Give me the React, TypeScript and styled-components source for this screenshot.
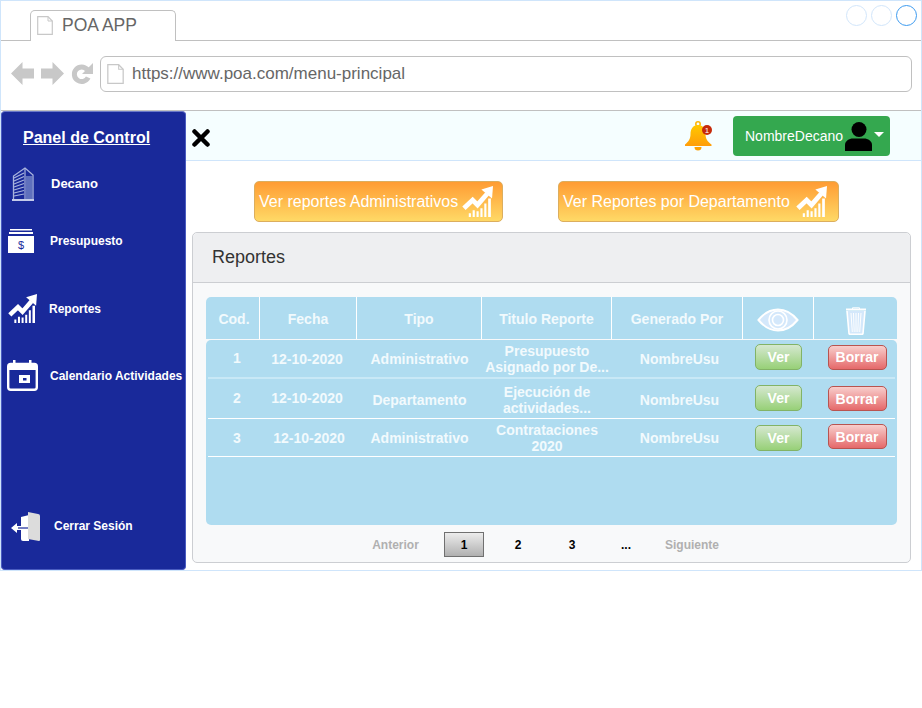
import * as React from "react";
import styled, { createGlobalStyle } from "styled-components";

const GlobalStyle = createGlobalStyle`
  html, body {
    margin: 0;
    padding: 0;
    background: #fff;
    font-family: "Liberation Sans", Arial, sans-serif;
  }
  * {
    box-sizing: border-box;
  }
`;

const DocIcon = ({ w, h }: { w: number; h: number }) => (
  <svg width={w} height={h} viewBox="0 0 16 19">
    <path d="M.7.7H11L15.3 5V18.3H.7Z" fill="#fff" stroke="#c8c8c8" strokeWidth="1.2" />
    <path d="M11 .7V5h4.3" fill="none" stroke="#c8c8c8" strokeWidth="1" />
  </svg>
);

const NavArrow = ({ flip }: { flip?: boolean }) => (
  <svg width="23" height="23" viewBox="0 0 23 23" style={flip ? { transform: "scaleX(-1)" } : undefined}>
    <path d="M0 11.5 11.5 0V6.5H23V16.5H11.5V23Z" fill="#c8c8c8" />
  </svg>
);

const ReloadIcon = () => (
  <svg width="22" height="23" viewBox="0 0 22 23">
    <path d="M17.2 15.5a7.3 7.3 0 1 1-1-8" fill="none" stroke="#c8c8c8" strokeWidth="5" />
    <path d="M22 1V12H11Z" fill="#c8c8c8" />
  </svg>
);

const BuildingIcon = () => (
  <svg width="22" height="34" viewBox="0 0 22 34">
    <path d="M1.500 32V9L13 1 21 8V32" fill="none" stroke="#a9b4de" strokeWidth="1.300" />
    <path d="M13 1V32" stroke="#a9b4de" strokeWidth="1.200" />
    <path
      d="M2 11 12 6M2 14 12 9.500M2 17 12 13M2 20 12 16.500M2 23 12 20M2 26 12 23.500M2 29 12 27"
      stroke="#a9b4de"
      strokeWidth="1.200"
    />
    <path d="M14 9h6v23h-6Z" fill="#5f70bd" />
    <path d="M0 33H22" stroke="#c4cbe9" strokeWidth="2" />
  </svg>
);

const MoneyIcon = () => (
  <svg width="26" height="24" viewBox="0 0 26 24">
    <rect x="2" y="0" width="22" height="1.500" fill="#fff" />
    <rect x="1" y="3" width="24" height="2" fill="#fff" />
    <rect x="0" y="7" width="26" height="17" fill="#fff" />
    <text x="13" y="20" fontSize="11" fontWeight="normal" textAnchor="middle" fill="#19299a" fontFamily="Liberation Sans, sans-serif">
      $
    </text>
  </svg>
);

const ChartIcon = ({ size }: { size: number }) => (
  <svg width={size} height={(size * 33) / 32} viewBox="0 0 32 33">
    <path d="M2 23 11 14.500l5 5L26 8" fill="none" stroke="#fff" strokeWidth="5" />
    <path d="M20 3.500 32 0 31 13Z" fill="#fff" />
    <path
      d="M7 28h2.200v5H7ZM11 25h2.200v8H11ZM15 26h2.200v7H15ZM19 23h2.200v10H19ZM23 18h2.200v15H23ZM27 13h2.800v20H27Z"
      fill="#fff"
    />
  </svg>
);

const CalendarIcon = () => (
  <svg width="31" height="31" viewBox="0 0 31 31">
    <rect x="1.200" y="4" width="28.600" height="25.800" rx="2.500" fill="none" stroke="#fff" strokeWidth="2.400" />
    <rect x="1" y="4" width="29" height="6" fill="#fff" />
    <rect x="6" y="0" width="2.500" height="6" fill="#fff" />
    <rect x="22" y="0" width="2.500" height="6" fill="#fff" />
    <rect x="12" y="15" width="11" height="8" fill="#fff" />
    <rect x="16" y="18" width="3.500" height="2.500" fill="#19299a" />
  </svg>
);

const LogoutIcon = () => (
  <svg width="31" height="31" viewBox="0 0 31 31">
    <path d="M11 6 19 4V30H13a2 2 0 0 1-2-2Z" fill="#fff" />
    <path d="M18 1 28 3a2 2 0 0 1 2 2V29a1 1 0 0 1-1 1L18 28Z" fill="#dcdcdc" />
    <path d="M1 17 7 12v3H18v4H7v3Z" fill="#fff" />
    <path d="M8 17H18" stroke="#19299a" strokeWidth="1.200" />
  </svg>
);

const CloseIcon = () => (
  <svg width="18" height="18" viewBox="0 0 18 18">
    <path d="M2.500 2.500 15.500 15.500M15.500 2.500 2.500 15.500" stroke="#000" strokeWidth="4.500" strokeLinecap="round" />
  </svg>
);

const BellIcon = () => (
  <svg width="28" height="30" viewBox="0 0 28 30">
    <defs>
      <linearGradient id="bell" x1="0" y1="0" x2="0" y2="1">
        <stop offset="0" stopColor="#ffc800" />
        <stop offset="1" stopColor="#ff9d0a" />
      </linearGradient>
    </defs>
    <circle cx="13" cy="3" r="2.200" fill="none" stroke="#ffb300" strokeWidth="1.500" />
    <path d="M13 4c5 0 7.500 4 7.500 9 0 5 2 7.500 6 10.500v1.500H0v-1.500c3.500-3 5.500-5.500 5.500-10.500 0-5 2.500-9 7.500-9Z" fill="url(#bell)" />
    <path d="M9.500 26h7a3.500 3.500 0 0 1-7 0Z" fill="#ffa000" />
    <circle cx="22" cy="9" r="5" fill="#c62a0a" />
    <text x="22" y="12" fontSize="8" textAnchor="middle" fill="#fff" fontFamily="Liberation Sans, sans-serif">
      1
    </text>
  </svg>
);

const UserIcon = () => (
  <svg width="27" height="29" viewBox="0 0 27 29">
    <circle cx="14" cy="7.500" r="7.500" fill="#000" />
    <path d="M0 29V23c0-4 4-6.500 8-6.500h11c4 0 8 2.500 8 6.500v6Z" fill="#000" />
  </svg>
);

const EyeIcon = () => (
  <svg width="42" height="24" viewBox="0 0 42 24">
    <path d="M1.500 12C8 4 14 1.500 21 1.500S34 4 40.500 12C34 20 28 22.500 21 22.500S8 20 1.500 12Z" fill="#d4e8fb" stroke="#fff" strokeWidth="2" />
    <circle cx="21" cy="12" r="9" fill="none" stroke="#fff" strokeWidth="1.600" />
    <circle cx="21" cy="12" r="5.500" fill="none" stroke="#fff" strokeWidth="1.600" />
  </svg>
);

const TrashIcon = () => (
  <svg width="22" height="28" viewBox="0 0 22 28">
    <path d="M1 2.500H21" stroke="#fff" strokeWidth="2" />
    <path d="M7.500 2V.8h7V2" fill="none" stroke="#fff" strokeWidth="1" />
    <path d="M2 4 4 26.500a1 1 0 0 0 1 .8H17a1 1 0 0 0 1-.8L20 4" fill="#d4e8fb" stroke="#fff" strokeWidth="1.600" />
    <path d="M6 6 7.300 25M11 6V25M16 6 14.700 25M8.500 6 9.200 25M13.500 6 12.800 25" stroke="#fff" strokeWidth="1" />
  </svg>
);

const Frame = styled.div`
  width: 922px;
  height: 571px;
  border: 1px solid #cfe5fb;
  display: flex;
  flex-direction: column;
`;

const TabStrip = styled.div`
  height: 40px;
  flex: none;
  border-bottom: 1px solid #c0c0c0;
  display: flex;
  justify-content: space-between;
  padding: 9px 4px 0 29px;
`;

const Tab = styled.div`
  width: 146px;
  height: 31px;
  border: 1px solid #c0c0c0;
  border-bottom: 0;
  border-radius: 5px 5px 0 0;
  background: #fff;
  display: flex;
  align-items: center;
  gap: 9px;
  padding: 0 0 1px 6px;
  font-size: 17.500px;
  color: #666;
`;

const WindowDots = styled.div`
  display: flex;
  gap: 4px;
  margin-top: -5px;
`;

const WindowDot = styled.span<{ $active?: boolean }>`
  width: 21px;
  height: 21px;
  border-radius: 50%;
  border: 1px solid ${(p) => (p.$active ? "#3d9bf0" : "#d2e6fb")};
`;

const AddressRow = styled.div`
  height: 70px;
  flex: none;
  border-bottom: 1px solid #c0c0c0;
  display: flex;
  align-items: center;
  padding: 0 9px 4px 10px;
`;

const NavIcons = styled.div`
  display: flex;
  align-items: center;
  gap: 7px;
  width: 89px;
  flex: none;
`;

const AddressBar = styled.div`
  flex: 1;
  height: 36px;
  border: 1px solid #c0c0c0;
  border-radius: 6px;
  display: flex;
  align-items: center;
  gap: 8px;
  padding: 0 0 0 6px;
  font-size: 17px;
  color: #666;
`;

const Body = styled.div`
  flex: 1;
  display: flex;
  min-height: 0;
`;

const Sidebar = styled.nav`
  width: 185px;
  flex: none;
  background: #19299a;
  border-radius: 4px;
  border: 1px solid #4a5cc0;
  border-top-color: #6a78c8;
  color: #fff;
  display: flex;
  flex-direction: column;
  padding-bottom: 18px;
`;

const PanelTitle = styled.div`
  height: 48px;
  flex: none;
  padding: 17px 0 0 21px;
  font-size: 16px;
  line-height: 18px;
  font-weight: bold;
  text-decoration: underline;
`;

const NavItem = styled.div<{ $height: number; $gap: number; $iconPad: number; $size?: number }>`
  height: ${(p) => p.$height}px;
  flex: none;
  display: flex;
  align-items: center;
  font-size: ${(p) => p.$size ?? 12}px;
  font-weight: bold;
  white-space: nowrap;

  & > svg {
    flex: none;
    margin-left: ${(p) => p.$iconPad}px;
  }
  & > span {
    margin-left: ${(p) => p.$gap}px;
  }
`;

const NavSpacer = styled.div`
  flex: 1;
`;

const Main = styled.div`
  flex: 1;
  min-width: 0;
  display: flex;
  flex-direction: column;
`;

const TopBar = styled.div`
  height: 50px;
  flex: none;
  background: #f5feff;
  border-bottom: 1px solid #cfe5fb;
  display: flex;
  align-items: center;
  padding: 0 31px 0 6px;
`;

const CloseButton = styled.div`
  display: flex;
  margin-top: 5px;
`;

const BellSlot = styled.div`
  display: flex;
  margin-left: auto;
  margin-right: 20px;
  margin-top: 0;
`;

const UserButton = styled.div`
  width: 157px;
  height: 40px;
  margin-top: 1px;
  background: #34a84f;
  border-radius: 4px;
  display: flex;
  align-items: center;
  padding-left: 12px;
  font-size: 14px;
  color: #fff;
  gap: 2px;
`;

const Caret = styled.span`
  width: 0;
  height: 0;
  border-left: 5px solid transparent;
  border-right: 5px solid transparent;
  border-top: 5px solid #fff;
  margin-bottom: 3px;
`;

const ReportActions = styled.div`
  display: flex;
  gap: 55px;
  padding: 20px 0 0 68px;
  height: 71px;
  flex: none;
`;

const ReportButton = styled.div<{ $width: number; $gap: number }>`
  width: ${(p) => p.$width}px;
  height: 41px;
  background: linear-gradient(#ff9c33, #ffd966);
  border: 1px solid #dcae5e;
  border-radius: 5px;
  display: flex;
  align-items: center;
  gap: ${(p) => p.$gap}px;
  padding-left: 4px;
  font-size: 16px;
  color: #fff;
  white-space: nowrap;
`;

const Card = styled.section`
  margin: 0 10px 0 6px;
  height: 331px;
  background: #f8f9fa;
  border: 1px solid #ccced2;
  border-radius: 5px;
  display: flex;
  flex-direction: column;
`;

const CardHeader = styled.div`
  height: 50px;
  flex: none;
  background: #eeeff1;
  border-bottom: 1px solid #ccced2;
  border-radius: 5px 5px 0 0;
  padding: 0 0 0 19px;
  display: flex;
  align-items: center;
  font-size: 18px;
  color: #333;
`;

const CardBody = styled.div`
  padding: 14px 13px 0;
  flex: 1;
`;

const HeadRow = styled.div`
  display: grid;
  grid-template-columns: 54px 97px 125px 130px 131px 71px 83px;
  height: 42px;
  background: #afdcf0;
  border-radius: 5px 5px 0 0;
`;

const HeadCell = styled.div<{ $last?: boolean; $pad?: number; $drop?: number }>`
  display: flex;
  align-items: center;
  justify-content: center;
  padding-left: ${(p) => p.$pad ?? 0}px;
  padding-top: ${(p) => p.$drop ?? 1}px;
  border-right: ${(p) => (p.$last ? "0" : "1px solid #fff")};
  font-size: 14px;
  font-weight: bold;
  color: #f2fafd;
  white-space: nowrap;
`;

const TableBody = styled.div`
  margin-top: 1px;
  height: 185px;
  background: #afdcf0;
  border-radius: 5px;
  padding: 0 2px;
`;

const Row = styled.div<{ $height: number; $thick?: boolean }>`
  display: grid;
  grid-template-columns: 52px 97px 125px 130px 131px 71px 81px;
  height: ${(p) => p.$height}px;
  border-bottom: ${(p) => (p.$thick ? "2px solid #c8e8f6" : "1px solid #fff")};
`;

const Cell = styled.div<{ $lift?: number; $drop?: number; $shift?: number }>`
  display: flex;
  align-items: center;
  justify-content: center;
  text-align: center;
  padding-bottom: ${(p) => p.$lift ?? 0}px;
  padding-top: ${(p) => p.$drop ?? 0}px;
  margin-left: ${(p) => p.$shift ?? 0}px;
  font-size: 14px;
  line-height: 16px;
  font-weight: bold;
  color: #f2fafd;
  white-space: nowrap;
`;

const ActionButton = styled.div<{ $tone: "green" | "red" }>`
  height: ${(p) => (p.$tone === "green" ? 26 : 25)}px;
  width: ${(p) => (p.$tone === "green" ? 47 : 59)}px;
  display: flex;
  align-items: center;
  justify-content: center;
  border-radius: 5px;
  font-size: 14px;
  font-weight: bold;
  color: #fff;
  background: ${(p) =>
    p.$tone === "green"
      ? "linear-gradient(#d5e8d0, #97d077)"
      : "linear-gradient(#f8cecc, #e5696a)"};
  border: 1px solid ${(p) => (p.$tone === "green" ? "#82b366" : "#b85450")};
`;

const Pager = styled.div`
  display: flex;
  align-items: center;
  height: 25px;
  margin-top: 7px;
  padding-left: 157px;
  font-size: 12px;
  font-weight: bold;
  color: #000;
`;

const PagerLink = styled.span<{ $width: number }>`
  width: ${(p) => p.$width}px;
  text-align: center;
  color: #b0b0b0;
`;

const PagerNumber = styled.span<{ $current?: boolean }>`
  width: ${(p) => (p.$current ? 40 : 54)}px;
  height: 25px;
  margin: ${(p) => (p.$current ? "0 7px 0 16px" : "0")};
  display: flex;
  align-items: center;
  justify-content: center;
  border: ${(p) => (p.$current ? "1px solid #707070" : "0")};
  background: ${(p) => (p.$current ? "linear-gradient(#ececec, #b0b0b0)" : "none")};
`;

const rows = [
  {
    cod: "1",
    codLift: 2,
    fecha: "12-10-2020",
    fechaLift: 0,
    fechaShift: -3,
    tipo: "Administrativo",
    tipoDrop: 0,
    title: ["Presupuesto", "Asignado por De..."],
    titleDrop: 0,
    verLift: 3,
    borrarLift: 3,
    height: 39,
    thick: true,
  },
  {
    cod: "2",
    codLift: 2,
    fecha: "12-10-2020",
    fechaLift: 2,
    fechaShift: -3,
    tipo: "Departamento",
    tipoDrop: 3,
    title: ["Ejecución de", "actividades..."],
    titleDrop: 2,
    verLift: 2,
    borrarLift: 0,
    height: 40,
    thick: false,
  },
  {
    cod: "3",
    codLift: 0,
    fecha: "12-10-2020",
    fechaLift: 0,
    fechaShift: 1,
    tipo: "Administrativo",
    tipoDrop: 0,
    title: ["Contrataciones", "2020"],
    titleDrop: 0,
    verLift: 0,
    borrarLift: 2,
    height: 38,
    thick: false,
  },
];

export default function App() {
  return (
    <>
      <GlobalStyle />
      <Frame>
        <TabStrip>
          <Tab>
            <DocIcon w={16} h={19} />
            POA APP
          </Tab>
          <WindowDots>
            <WindowDot />
            <WindowDot />
            <WindowDot $active />
          </WindowDots>
        </TabStrip>
        <AddressRow>
          <NavIcons>
            <NavArrow />
            <NavArrow flip />
            <ReloadIcon />
          </NavIcons>
          <AddressBar>
            <DocIcon w={17} h={20} />
            https://www.poa.com/menu-principal
          </AddressBar>
        </AddressRow>
        <Body>
          <Sidebar>
            <PanelTitle>Panel de Control</PanelTitle>
            <NavItem $height={47} $iconPad={10} $gap={17} $size={13}>
              <BuildingIcon />
              <span>Decano</span>
            </NavItem>
            <NavItem $height={68} $iconPad={6} $gap={16}>
              <MoneyIcon />
              <span>Presupuesto</span>
            </NavItem>
            <NavItem $height={67} $iconPad={6} $gap={12}>
              <ChartIcon size={29} />
              <span>Reportes</span>
            </NavItem>
            <NavItem $height={67} $iconPad={5} $gap={12}>
              <CalendarIcon />
              <span>Calendario Actividades</span>
            </NavItem>
            <NavSpacer />
            <NavItem $height={50} $iconPad={8} $gap={13}>
              <LogoutIcon />
              <span>Cerrar Sesión</span>
            </NavItem>
          </Sidebar>
          <Main>
            <TopBar>
              <CloseButton>
                <CloseIcon />
              </CloseButton>
              <BellSlot>
                <BellIcon />
              </BellSlot>
              <UserButton>
                NombreDecano
                <UserIcon />
                <Caret />
              </UserButton>
            </TopBar>
            <ReportActions>
              <ReportButton $width={249} $gap={4}>
                Ver reportes Administrativos
                <ChartIcon size={31} />
              </ReportButton>
              <ReportButton $width={281} $gap={6}>
                Ver Reportes por Departamento
                <ChartIcon size={31} />
              </ReportButton>
            </ReportActions>
            <Card>
              <CardHeader>Reportes</CardHeader>
              <CardBody>
                <HeadRow>
                  <HeadCell $pad={3}>Cod.</HeadCell>
                  <HeadCell>Fecha</HeadCell>
                  <HeadCell>Tipo</HeadCell>
                  <HeadCell>Titulo Reporte</HeadCell>
                  <HeadCell>Generado Por</HeadCell>
                  <HeadCell $drop={4}>
                    <EyeIcon />
                  </HeadCell>
                  <HeadCell $last $drop={5}>
                    <TrashIcon />
                  </HeadCell>
                </HeadRow>
                <TableBody>
                  {rows.map((row) => (
                    <Row key={row.cod} $height={row.height} $thick={row.thick}>
                      <Cell $lift={row.codLift} $shift={6}>{row.cod}</Cell>
                      <Cell $lift={row.fechaLift} $shift={row.fechaShift}>{row.fecha}</Cell>
                      <Cell $drop={row.tipoDrop}>{row.tipo}</Cell>
                      <Cell $drop={row.titleDrop}>
                        <span>
                          {row.title[0]}
                          <br />
                          {row.title[1]}
                        </span>
                      </Cell>
                      <Cell $drop={row.tipoDrop} $shift={4}>NombreUsu</Cell>
                      <Cell $lift={row.verLift}>
                        <ActionButton $tone="green">Ver</ActionButton>
                      </Cell>
                      <Cell $lift={row.borrarLift} $shift={5}>
                        <ActionButton $tone="red">Borrar</ActionButton>
                      </Cell>
                    </Row>
                  ))}
                </TableBody>
                <Pager>
                  <PagerLink $width={65}>Anterior</PagerLink>
                  <PagerNumber $current>1</PagerNumber>
                  <PagerNumber>2</PagerNumber>
                  <PagerNumber>3</PagerNumber>
                  <PagerNumber>...</PagerNumber>
                  <PagerLink $width={78}>Siguiente</PagerLink>
                </Pager>
              </CardBody>
            </Card>
          </Main>
        </Body>
      </Frame>
    </>
  );
}
